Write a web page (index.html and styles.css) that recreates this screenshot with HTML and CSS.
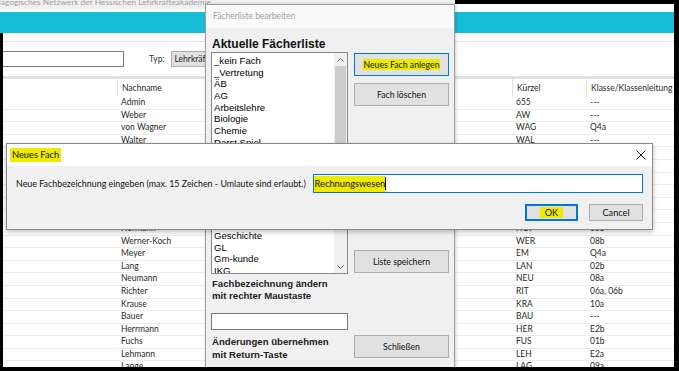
FILE: index.html
```html
<!DOCTYPE html>
<html lang="de">

<head>
  <meta charset="UTF-8">
  <title>Fächerliste bearbeiten</title>
  <link rel="stylesheet" href="styles.css">
</head>

<body>
  <div class="app">
    <div class="titlebar">
      <div class="title-text"><span>Pädagogisches Netzwerk der Hessischen Lehrkräfteakademie</span></div>
      <div class="title-rest"></div>
    </div>
    <div class="banner"></div>

    <div class="content">
      <div class="subbar"></div>
      <div class="toolbar">
        <div class="search"></div>
        <span class="typ">Typ:</span>
        <div class="select">Lehrkräfte</div>
      </div>
      <div class="band"></div>

      <div class="table">
        <div class="row head">
          <div class="cell"></div>
          <div class="cell sep">Nachname</div>
          <div class="cell"></div>
          <div class="cell sep">Kürzel</div>
          <div class="cell sep">Klasse/Klassenleitung</div>
        </div>
        <div class="row"><div class="cell"></div><div class="cell">Admin</div><div class="cell"></div><div class="cell">655</div><div class="cell">---</div></div>
        <div class="row"><div class="cell"></div><div class="cell">Weber</div><div class="cell"></div><div class="cell">AW</div><div class="cell">---</div></div>
        <div class="row"><div class="cell"></div><div class="cell">von Wagner</div><div class="cell"></div><div class="cell">WAG</div><div class="cell">Q4a</div></div>
        <div class="row"><div class="cell"></div><div class="cell">Walter</div><div class="cell"></div><div class="cell">WAL</div><div class="cell">---</div></div>
        <div class="row"><div class="cell"></div><div class="cell">Schmidt</div><div class="cell"></div><div class="cell">SCH</div><div class="cell">07a</div></div>
        <div class="row"><div class="cell"></div><div class="cell">Müller</div><div class="cell"></div><div class="cell">MÜL</div><div class="cell">03a</div></div>
        <div class="row"><div class="cell"></div><div class="cell">Schneider</div><div class="cell"></div><div class="cell">SNE</div><div class="cell">09b</div></div>
        <div class="row"><div class="cell"></div><div class="cell">Fischer</div><div class="cell"></div><div class="cell">FIS</div><div class="cell">04a</div></div>
        <div class="row"><div class="cell"></div><div class="cell">Wagner</div><div class="cell"></div><div class="cell">WAN</div><div class="cell">---</div></div>
        <div class="row"><div class="cell"></div><div class="cell">Becker</div><div class="cell"></div><div class="cell">BEC</div><div class="cell">E1a</div></div>
        <div class="row"><div class="cell"></div><div class="cell">Hofmann</div><div class="cell"></div><div class="cell">HOF</div><div class="cell">05b</div></div>
        <div class="row"><div class="cell"></div><div class="cell">Werner-Koch</div><div class="cell"></div><div class="cell">WER</div><div class="cell">08b</div></div>
        <div class="row"><div class="cell"></div><div class="cell">Meyer</div><div class="cell"></div><div class="cell">EM</div><div class="cell">Q4a</div></div>
        <div class="row"><div class="cell"></div><div class="cell">Lang</div><div class="cell"></div><div class="cell">LAN</div><div class="cell">02b</div></div>
        <div class="row"><div class="cell"></div><div class="cell">Neumann</div><div class="cell"></div><div class="cell">NEU</div><div class="cell">08a</div></div>
        <div class="row"><div class="cell"></div><div class="cell">Richter</div><div class="cell"></div><div class="cell">RIT</div><div class="cell">06a, 06b</div></div>
        <div class="row"><div class="cell"></div><div class="cell">Krause</div><div class="cell"></div><div class="cell">KRA</div><div class="cell">10a</div></div>
        <div class="row"><div class="cell"></div><div class="cell">Bauer</div><div class="cell"></div><div class="cell">BAU</div><div class="cell">---</div></div>
        <div class="row"><div class="cell"></div><div class="cell">Herrmann</div><div class="cell"></div><div class="cell">HER</div><div class="cell">E2b</div></div>
        <div class="row"><div class="cell"></div><div class="cell">Fuchs</div><div class="cell"></div><div class="cell">FUS</div><div class="cell">01b</div></div>
        <div class="row"><div class="cell"></div><div class="cell">Lehmann</div><div class="cell"></div><div class="cell">LEH</div><div class="cell">E2a</div></div>
        <div class="row"><div class="cell"></div><div class="cell">Lange</div><div class="cell"></div><div class="cell">LAG</div><div class="cell">09a</div></div>
      </div>
    </div>

    <!-- Fächerliste bearbeiten -->
    <div class="dialog faecher">
      <div class="faecher-title">Fächerliste bearbeiten</div>
      <div class="faecher-body">
        <div class="faecher-left">
          <div class="heading">Aktuelle Fächerliste</div>
          <div class="listbox">
            <div class="items">
              <div>_kein Fach</div>
              <div>_Vertretung</div>
              <div>ÄB</div>
              <div>AG</div>
              <div>Arbeitslehre</div>
              <div>Biologie</div>
              <div>Chemie</div>
              <div>Darst.Spiel</div>
              <div>Deutsch</div>
              <div>Englisch</div>
              <div>Erdkunde</div>
              <div>Ethik</div>
              <div>Ev. Religion</div>
              <div>Französisch</div>
              <div>Förderunterricht</div>
              <div>Geschichte</div>
              <div>GL</div>
              <div>Gm-kunde</div>
              <div>IKG</div>
            </div>
            <div class="scrollbar">
              <div class="arrow">
                <svg width="7" height="4" viewBox="0 0 7 4"><path d="M0.5 3.5 L3.5 0.5 L6.5 3.5" fill="none" stroke="#606060" stroke-width="1"/></svg>
              </div>
              <div class="thumb"></div>
              <div class="track"></div>
              <div class="arrow">
                <svg width="7" height="4" viewBox="0 0 7 4"><path d="M0.5 0.5 L3.5 3.5 L6.5 0.5" fill="none" stroke="#606060" stroke-width="1"/></svg>
              </div>
            </div>
          </div>
          <div class="note">Fachbezeichnung ändern<br>mit rechter Maustaste</div>
          <div class="rename"></div>
          <div class="note note-last">Änderungen übernehmen<br>mit Return-Taste</div>
        </div>
        <div class="faecher-right">
          <button class="btn default first"><span class="mark">Neues Fach anlegen</span></button>
          <button class="btn second">Fach löschen</button>
          <button class="btn third">Liste speichern</button>
          <button class="btn fourth">Schließen</button>
        </div>
      </div>
    </div>

    <!-- Neues Fach -->
    <div class="dialog neu">
      <div class="neu-title">
        <span class="mark">Neues Fach</span>
        <svg class="close" width="10" height="10" viewBox="0 0 10 10"><path d="M0.5 0.5 L9.5 9.5 M9.5 0.5 L0.5 9.5" stroke="#222" stroke-width="1"/></svg>
      </div>
      <div class="neu-body">
        <div class="neu-row">
          <span class="neu-label">Neue Fachbezeichnung eingeben (max. 15 Zeichen - Umlaute sind erlaubt.)</span>
          <div class="neu-input"><span class="mark">Rechnungswesen</span><span class="caret"></span></div>
        </div>
        <div class="neu-buttons">
          <button class="btn ok"><span class="mark">&nbsp;&nbsp;OK&nbsp;&nbsp;</span></button>
          <button class="btn cancel">Cancel</button>
        </div>
      </div>
    </div>
  </div>
</body>

</html>
```

FILE: styles.css
```css
* {
  margin: 0;
  padding: 0;
  box-sizing: border-box;
}

body {
  background: #000;
  width: 679px;
  height: 371px;
  overflow: hidden;
  font-family: 'Lato', 'Open Sans', sans-serif;
}

.app {
  position: relative;
  width: 674px;
  height: 367px;
  background: #fff;
  overflow: hidden;
}

/* window title, cut off at the top */
.titlebar {
  display: flex;
  height: 12px;
  background: #fff;
}

.title-text {
  width: 455px;
  height: 9px;
  background: #f0f0f0;
  overflow: hidden;
  color: #a0a0a0;
  font-size: 8.4px;
  line-height: 9px;
  white-space: nowrap;
}

.title-text span {
  display: block;
  margin-top: -2px;
  margin-left: -13px;
}

.title-rest {
  flex: 1;
  height: 4px;
  background: #000;
}

.banner {
  height: 21px;
  background: #17bcd5;
}

.content {
  border-left: 3px solid #000;
  height: 334px;
}

.subbar {
  height: 9px;
  border-bottom: 1px solid #e2e2e2;
}

.toolbar {
  display: flex;
  align-items: center;
  margin-top: 9px;
  height: 16px;
}

.search {
  width: 121px;
  height: 16px;
  border: 1px solid #7a7a7a;
  border-left: none;
}

.typ {
  margin-left: 25px;
  font-size: 8.5px;
  color: #333;
}

.select {
  margin-left: 6px;
  width: 90px;
  height: 16px;
  background: #e1e1e1;
  border: 1px solid #adadad;
  font-size: 8.5px;
  line-height: 14px;
  padding-left: 3px;
  color: #222;
}

.band {
  margin-top: 9px;
  height: 3px;
  background: #e0e0e0;
}

/* user table */
.table {
  font-size: 8.5px;
  color: #2a2a2a;
}

.row {
  display: grid;
  grid-template-columns: 114px 200px 195px 74px 1fr;
  height: 12.6px;
  line-height: 11.6px;
  border-bottom: 1px solid #ededed;
}

.row.head {
  height: 18px;
  line-height: 18px;
  border-bottom: none;
}

.cell {
  padding-left: 4px;
  white-space: nowrap;
  overflow: hidden;
}

.head .sep {
  border-left: 1px solid #e3e3e3;
}

/* dialogs */
.dialog {
  position: absolute;
}

.faecher {
  left: 205px;
  top: 4px;
  width: 250px;
  height: 380px;
  background: #f0f0f0;
  border: 1px solid #9c9c9c;
  box-shadow: 1px 0 3px rgba(0, 0, 0, 0.2);
}

.faecher-title {
  height: 23px;
  background: #fafafa;
  color: #a0a0a0;
  font-size: 8.5px;
  line-height: 23px;
  padding-left: 7px;
}

.faecher-body {
  display: flex;
  gap: 6px;
  padding-left: 5px;
}

.faecher-left {
  width: 137px;
  font-family: 'Liberation Sans', Arial, sans-serif;
}

.heading {
  margin-top: 9px;
  margin-left: 1px;
  height: 15px;
  font-size: 12px;
  font-weight: bold;
  line-height: 15px;
  color: #111;
}

.listbox {
  display: flex;
  height: 222px;
  background: #fff;
  border: 1px solid #828790;
}

.items {
  flex: 1;
  overflow: hidden;
  padding: 2px 0 0 2px;
  font-size: 9.6px;
  line-height: 11.67px;
  color: #000;
}

.scrollbar {
  width: 13px;
  display: flex;
  flex-direction: column;
  background: #f0f0f0;
}

.arrow {
  height: 13px;
  display: flex;
  align-items: center;
  justify-content: center;
}

.thumb {
  height: 115px;
  margin: 0 1px;
  background: #cdcdcd;
}

.track {
  flex: 1;
}

.note {
  margin-top: 4px;
  margin-left: 1px;
  font-size: 9.6px;
  font-weight: bold;
  line-height: 12px;
  color: #222;
}

.note-last {
  margin-top: 6px;
  line-height: 12.5px;
}

.rename {
  margin-top: 11px;
  height: 17px;
  background: #fff;
  border: 1px solid #7a7a7a;
}

.faecher-right {
  width: 95px;
  display: flex;
  flex-direction: column;
}

.btn {
  height: 23px;
  background: #e1e1e1;
  border: 1px solid #adadad;
  font-family: 'Lato', 'Open Sans', sans-serif;
  font-size: 8.7px;
  color: #111;
}

.btn.default {
  border-color: #0078d7;
}

.first {
  margin-top: 25px;
}

.second {
  margin-top: 7px;
}

.third {
  margin-top: 144px;
}

.fourth {
  margin-top: 62px;
}

.mark {
  background: #eeea00;
}

/* Neues Fach */
.neu {
  left: 6px;
  top: 143px;
  width: 647px;
  height: 87px;
  background: #f0f0f0;
  border: 1px solid #8a8a8a;
  box-shadow: 0 2px 5px rgba(0, 0, 0, 0.25);
}

.neu-title {
  height: 22px;
  background: #fff;
  display: flex;
  align-items: center;
  justify-content: space-between;
  padding: 0 6px 0 3px;
  font-size: 9.3px;
}

.neu-title .mark {
  line-height: 14px;
  padding: 0 2px;
  color: #111;
}

.neu-body {
  padding: 8px 9px 0 9px;
  font-size: 8.9px;
  color: #111;
}

.neu-row {
  display: flex;
  align-items: center;
  height: 19px;
}

.neu-label {
  width: 297px;
  white-space: nowrap;
}

.neu-input {
  width: 331px;
  height: 19px;
  background: #fff;
  border: 1px solid #0078d7;
  display: flex;
  align-items: center;
  font-size: 9.3px;
}

.neu-input .mark {
  line-height: 16px;
  padding-left: 1px;
}

.caret {
  width: 1px;
  height: 13px;
  background: #000;
}

.neu-buttons {
  display: flex;
  justify-content: flex-end;
  gap: 11px;
  margin-top: 11px;
}

.neu-buttons .btn {
  height: 17px;
  font-size: 9.2px;
}

.ok {
  width: 53px;
  border: 2px solid #0078d7;
}

.ok .mark {
  line-height: 11px;
}

.cancel {
  width: 54px;
}
```
